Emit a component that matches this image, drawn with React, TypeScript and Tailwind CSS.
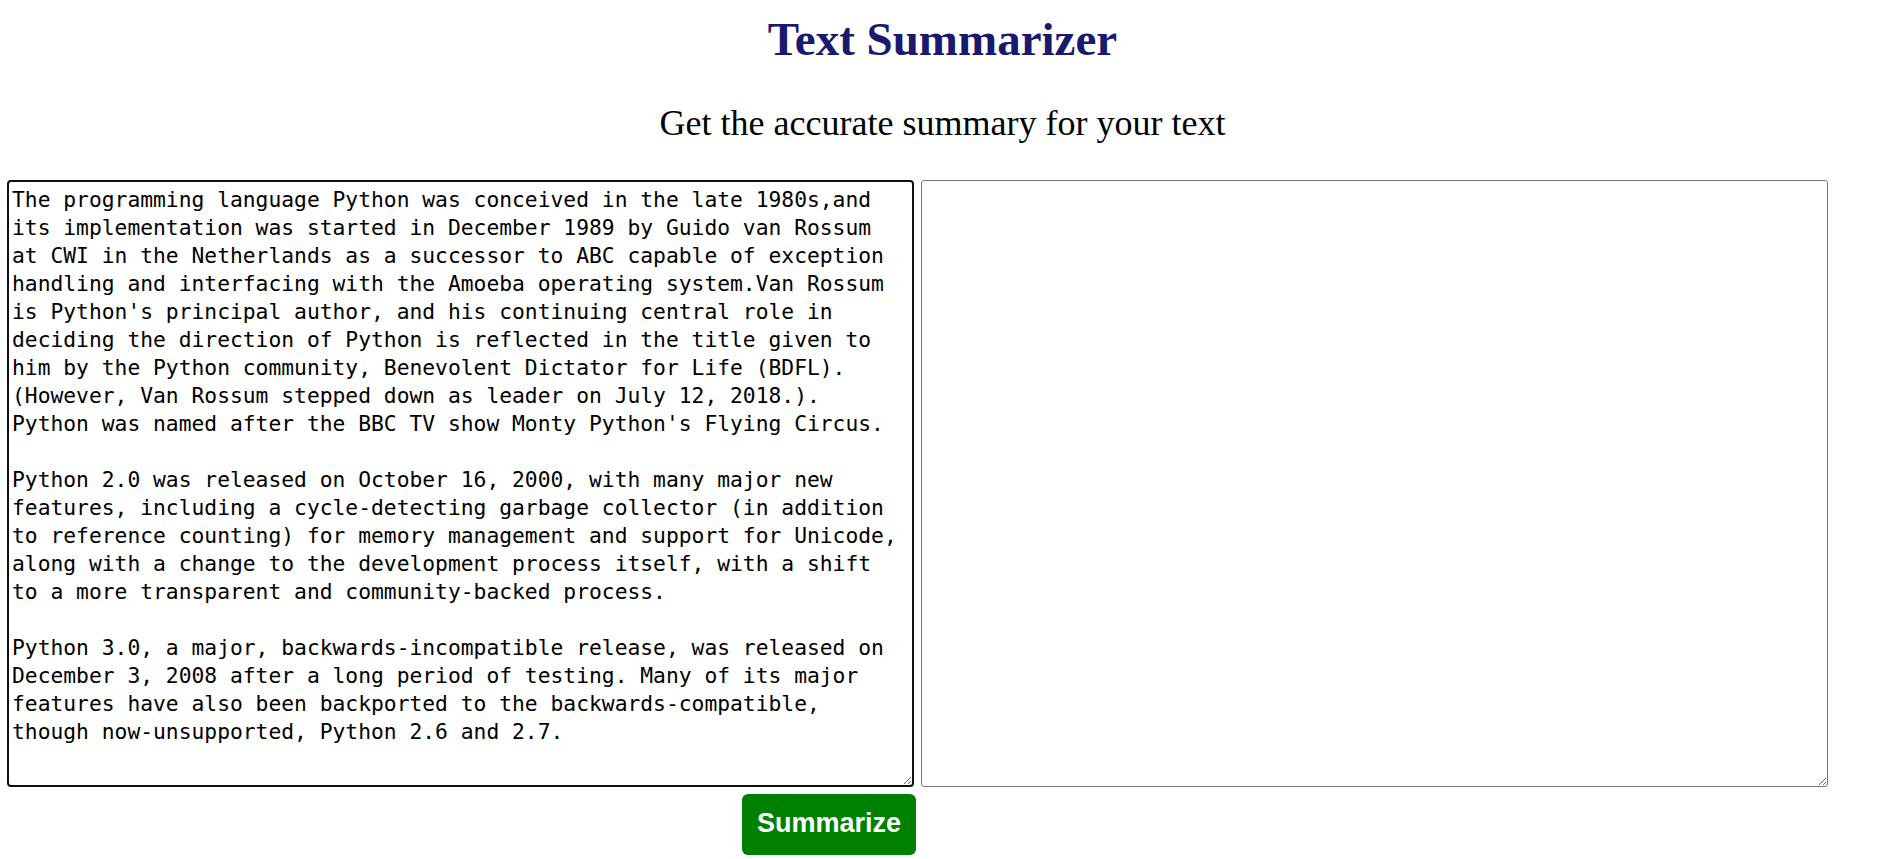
import React, { useEffect, useRef, useState } from 'react';

const sampleText = `The programming language Python was conceived in the late 1980s,and its implementation was started in December 1989 by Guido van Rossum at CWI in the Netherlands as a successor to ABC capable of exception handling and interfacing with the Amoeba operating system.Van Rossum is Python's principal author, and his continuing central role in deciding the direction of Python is reflected in the title given to him by the Python community, Benevolent Dictator for Life (BDFL). (However, Van Rossum stepped down as leader on July 12, 2018.). Python was named after the BBC TV show Monty Python's Flying Circus.

Python 2.0 was released on October 16, 2000, with many major new features, including a cycle-detecting garbage collector (in addition to reference counting) for memory management and support for Unicode, along with a change to the development process itself, with a shift to a more transparent and community-backed process.

Python 3.0, a major, backwards-incompatible release, was released on December 3, 2008 after a long period of testing. Many of its major features have also been backported to the backwards-compatible, though now-unsupported, Python 2.6 and 2.7.`;

const App: React.FC = () => {
    const [input, setInput] = useState(sampleText);
    const [summary, setSummary] = useState('');
    const inputRef = useRef<HTMLTextAreaElement>(null);

    useEffect(() => {
        const el = inputRef.current;
        if (!el) return;
        el.focus();
        el.setSelectionRange(el.value.length, el.value.length);
    }, []);

    const handleSummarize = () => {
        // naive summary: first sentence of each paragraph
        const parts = input
            .split(/\n\s*\n/)
            .map(p => p.trim().split(/(?<=\.)\s+/)[0])
            .filter(Boolean);
        setSummary(parts.join(' '));
    };

    return (
        <div className="min-h-screen bg-white">
            <div className="pl-[6px] text-center font-['Liberation_Serif',serif]">
                <h1 className="pt-[12px] text-[47px] leading-[54px] font-bold text-[#191970]">Text Summarizer</h1>
                <p className="mt-[37px] text-[36px] leading-[41px] text-black">Get the accurate summary for your text</p>
            </div>

            <div className="mt-[36px] ml-[7px] flex gap-[7px]">
                <textarea
                    ref={inputRef}
                    value={input}
                    onChange={e => setInput(e.target.value)}
                    spellCheck={false}
                    className="w-[907px] h-[607px] resize rounded-[4px] border-2 border-[#101010] pt-[4px] pl-[3px] pr-[9px] font-['DejaVu_Sans_Mono',monospace] text-[21.3px] leading-[28px] text-black caret-black outline-none"
                />
                <textarea
                    value={summary}
                    readOnly
                    className="w-[907px] h-[607px] resize rounded-[3px] border border-[#767676] pt-[5px] pl-[4px] font-['DejaVu_Sans_Mono',monospace] text-[21.3px] leading-[28px] text-black outline-none"
                />
            </div>

            <div className="ml-[7px] mt-[7px] flex w-[909px] justify-end">
                <button
                    onClick={handleSummarize}
                    className="flex h-[61px] w-[174px] items-center justify-center rounded-[6px] bg-[#008000] pb-[3px] font-['Liberation_Sans',Arial,sans-serif] text-[27px] font-bold text-white"
                >
                    Summarize
                </button>
            </div>
        </div>
    );
};

export default App;
